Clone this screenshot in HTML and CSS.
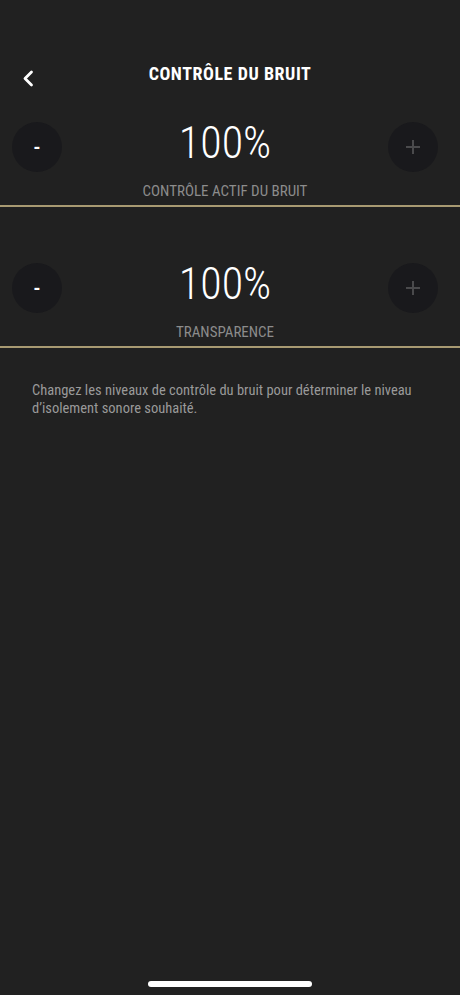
FILE: index.html
```html
<!DOCTYPE html>
<html lang="fr">
<head>
    <meta charset="UTF-8">
    <meta name="viewport" content="width=device-width, initial-scale=1.0">
    <title>Contrôle du bruit</title>
    <link rel="stylesheet" href="styles.css">
</head>
<body>
    <div class="header">
        <button class="back" aria-label="Retour">
            <svg width="12" height="17" viewBox="0 0 12 17">
                <path d="M9.5 2 L3 8.5 L9.5 15" fill="none" stroke="#fff" stroke-width="2.8" stroke-linecap="round" stroke-linejoin="round"/>
            </svg>
        </button>
        <h1 class="title">CONTRÔLE DU BRUIT</h1>
    </div>

    <div class="control">
        <div class="control-row">
            <button class="step minus">-</button>
            <div class="value">100%</div>
            <button class="step plus" aria-label="Plus">
                <svg width="16" height="16" viewBox="0 0 16 16">
                    <path d="M8 1 V15 M1 8 H15" stroke="#4a4a4c" stroke-width="2"/>
                </svg>
            </button>
        </div>
        <div class="control-label">CONTRÔLE ACTIF DU BRUIT</div>
    </div>

    <div class="control">
        <div class="control-row">
            <button class="step minus">-</button>
            <div class="value">100%</div>
            <button class="step plus" aria-label="Plus">
                <svg width="16" height="16" viewBox="0 0 16 16">
                    <path d="M8 1 V15 M1 8 H15" stroke="#4a4a4c" stroke-width="2"/>
                </svg>
            </button>
        </div>
        <div class="control-label">TRANSPARENCE</div>
    </div>

    <p class="hint">Changez les niveaux de contrôle du bruit pour déterminer le niveau d’isolement sonore souhaité.</p>

    <div class="home-bar"></div>
</body>
</html>
```

FILE: styles.css
```css
body {
    font-family: "Roboto Condensed", Roboto, sans-serif;
    background-color: #212121;
    color: #FFFFFF;
    margin: 0;
    min-height: 995px;
}

button {
    font-family: inherit;
    border: none;
    background: none;
    padding: 0;
    cursor: pointer;
}

.header {
    position: relative;
    margin-top: 50px;
    height: 48px;
    display: flex;
    align-items: center;
    justify-content: center;
}

.back {
    position: absolute;
    left: 20px;
    top: 20px;
    width: 16px;
    height: 17px;
}

.title {
    margin: 0;
    font-size: 18px;
    line-height: 48px;
    font-weight: 700;
    letter-spacing: 0.55px;
    color: #FFFFFF;
}

.control {
    padding: 24px 0 4px;
    border-bottom: 2px solid #A89A72;
}

.control + .control {
    padding-top: 56px;
}

.control-row {
    display: grid;
    grid-template-columns: 50px 1fr 50px;
    align-items: start;
    padding: 0 22px 0 12px;
}

.step {
    width: 50px;
    height: 50px;
    border-radius: 50%;
    background-color: #19191C;
    display: flex;
    align-items: center;
    justify-content: center;
}

.minus {
    color: #FFFFFF;
    font-size: 22px;
    font-weight: 500;
}

.value {
    text-align: center;
    font-size: 44px;
    line-height: 43px;
    font-weight: 300;
    color: #FFFFFF;
}

.control-label {
    margin-top: 10px;
    padding-right: 10px;
    text-align: center;
    font-size: 15px;
    line-height: 19px;
    color: #8C8C8C;
}

.hint {
    margin: 34px 32px 0;
    font-size: 14.5px;
    line-height: 18px;
    color: #9A9A9A;
}

.home-bar {
    position: fixed;
    left: 148px;
    bottom: 8px;
    width: 164px;
    height: 6px;
    border-radius: 3px;
    background-color: #FFFFFF;
}
```
